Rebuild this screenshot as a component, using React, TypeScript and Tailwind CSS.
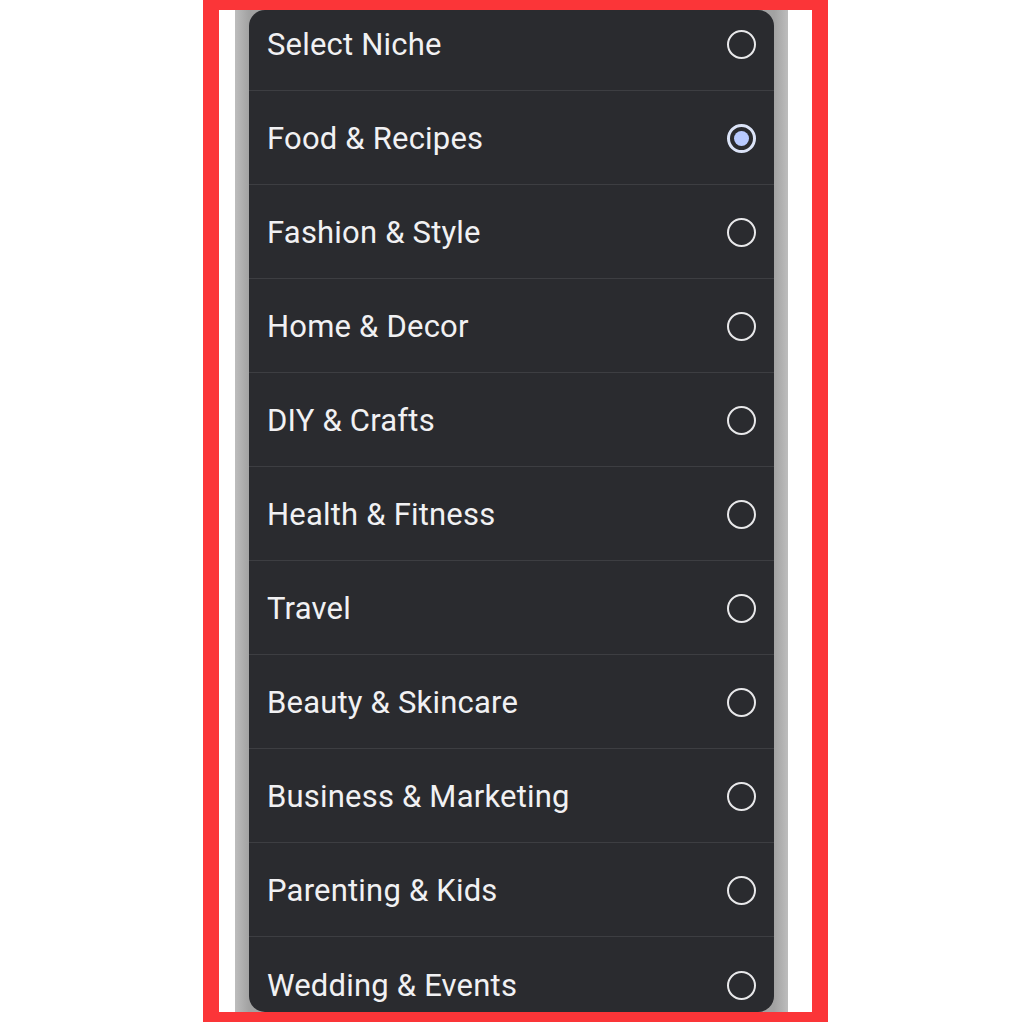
const niches = [
  "Select Niche",
  "Food & Recipes",
  "Fashion & Style",
  "Home & Decor",
  "DIY & Crafts",
  "Health & Fitness",
  "Travel",
  "Beauty & Skincare",
  "Business & Marketing",
  "Parenting & Kids",
  "Wedding & Events",
];

function Radio({ checked }: { checked: boolean }) {
  if (checked) {
    return (
      <span className="mt-[2px] flex h-[29px] w-[29px] items-center justify-center rounded-full border-[3px] border-[#dbe3f7]">
        <span className="h-[15px] w-[15px] rounded-full bg-[#b8caff]" />
      </span>
    );
  }
  return <span className="mt-[2px] h-[29px] w-[29px] rounded-full border-[2.5px] border-[#e8e8ea]" />;
}

export default function App() {
  const selected = "Food & Recipes";
  return (
    <div className="flex h-[1024px] w-[1024px] bg-white pl-[203px]">
      <div className="flex h-[1022px] w-[625px] border-x-[16px] border-b-[10px] border-t-[10px] border-[#fb3538] bg-white pl-[16px] pr-[24px]">
        <div className="w-[14px] shrink-0 bg-gradient-to-r from-[#bdbdbd] to-[#a2a2a2]" />
        <div className="flex-1 bg-[#a2a2a2]">
          <div className="h-full overflow-hidden rounded-[16px] bg-[#2a2b2f]">
            <ul className="mt-[-13px]">
              {niches.map((n, i) => (
                <li
                  key={n}
                  className={`flex h-[94px] items-center justify-between pl-[18px] pr-[18px] ${
                    i < niches.length - 1 ? "border-b border-[#3d3e42]" : ""
                  }`}
                >
                  <span className="pt-[4px] font-['Roboto',sans-serif] text-[31px] tracking-[0.2px] text-[#f1f1f3]">
                    {n}
                  </span>
                  <Radio checked={n === selected} />
                </li>
              ))}
            </ul>
          </div>
        </div>
        <div className="w-[14px] shrink-0 bg-gradient-to-r from-[#a2a2a2] to-[#bdbdbd]" />
      </div>
    </div>
  );
}
